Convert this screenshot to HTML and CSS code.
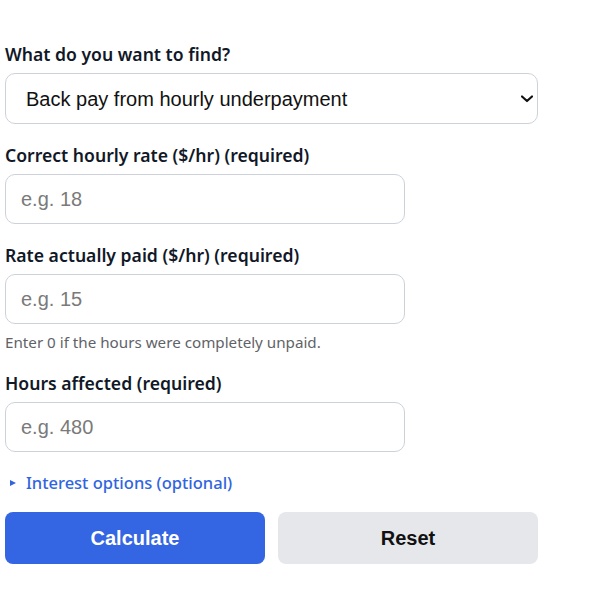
FILE: index.html
```html
<!DOCTYPE html>
<html lang="en">
<head>
<meta charset="utf-8">
<title>Back pay calculator</title>
<link rel="stylesheet" href="styles.css">
</head>
<body>
<form class="calc">
  <div class="field">
    <label class="label" for="mode">What do you want to find?</label>
    <div class="select-wrap">
      <select id="mode" class="select">
        <option>Back pay from hourly underpayment</option>
      </select>
      <svg class="select-arrow" width="12" height="8" viewBox="0 0 12 8" aria-hidden="true">
        <path d="M1 1.5 L6 6 L11 1.5" fill="none" stroke="#111111" stroke-width="2.2" stroke-linecap="round" stroke-linejoin="round"/>
      </svg>
    </div>
  </div>
  <div class="field">
    <label class="label" for="rate">Correct hourly rate ($/hr) (required)</label>
    <input id="rate" class="input" type="text" placeholder="e.g. 18">
  </div>
  <div class="field">
    <label class="label" for="paid">Rate actually paid ($/hr) (required)</label>
    <input id="paid" class="input" type="text" placeholder="e.g. 15">
    <p class="hint">Enter 0 if the hours were completely unpaid.</p>
  </div>
  <div class="field">
    <label class="label" for="hours">Hours affected (required)</label>
    <input id="hours" class="input" type="text" placeholder="e.g. 480">
  </div>
  <details class="more">
    <summary class="more-toggle">Interest options (optional)</summary>
  </details>
  <div class="actions">
    <button type="button" class="btn btn-primary">Calculate</button>
    <button type="reset" class="btn btn-secondary">Reset</button>
  </div>
</form>
</body>
</html>
```
FILE: styles.css
```css
html, body {
  margin: 0;
  background: #ffffff;
}

body {
  font-family: "Noto Sans", "Open Sans", sans-serif;
  color: #111827;
}

.calc {
  width: 533px;
  padding: 43px 0 0 5px;
}

.field {
  margin-bottom: 20px;
}

.label {
  display: block;
  font-size: 17.6px;
  font-weight: 600;
  line-height: 23px;
  margin-bottom: 7px;
}

.select,
.input {
  box-sizing: border-box;
  display: block;
  font-family: "Liberation Sans", Arial, sans-serif;
  font-size: 20px;
  color: #111111;
  background: #ffffff;
  border: 1px solid #cdd2da;
  border-radius: 10px;
}

.select-wrap {
  position: relative;
  width: 533px;
}

.select {
  appearance: none;
  -webkit-appearance: none;
  width: 533px;
  height: 51px;
  padding: 0 32px 0 20px;
}

/* chevron drawn over the native select */
.select-arrow {
  position: absolute;
  right: 5px;
  top: 22px;
  pointer-events: none;
}

.input {
  width: 400px;
  height: 50px;
  padding: 0 15px;
}

.input::placeholder {
  color: #7a7a7a;
}

.hint {
  margin: 9px 0 0;
  font-size: 15.2px;
  line-height: 19px;
  color: #5f6368;
}

.more {
  margin-bottom: 18px;
}

.more-toggle {
  cursor: pointer;
  color: #3164e0;
  font-size: 16.5px;
  font-weight: 500;
  line-height: 22px;
  padding-left: 5px;
  list-style: none;
  display: flex;
  align-items: center;
  gap: 10px;
}

.more-toggle::-webkit-details-marker {
  display: none;
}

/* small disclosure triangle */
.more-toggle::before {
  content: "";
  width: 0;
  height: 0;
  border-top: 3px solid transparent;
  border-bottom: 3px solid transparent;
  border-left: 6px solid #3164e0;
}

.actions {
  display: flex;
  gap: 13px;
}

.btn {
  flex: 1;
  height: 52px;
  border: none;
  border-radius: 8px;
  font-family: "Liberation Sans", Arial, sans-serif;
  font-size: 20px;
  font-weight: 700;
  cursor: pointer;
}

.btn-primary {
  background: #3465e3;
  color: #ffffff;
}

.btn-secondary {
  background: #e5e7eb;
  color: #111111;
}
```
